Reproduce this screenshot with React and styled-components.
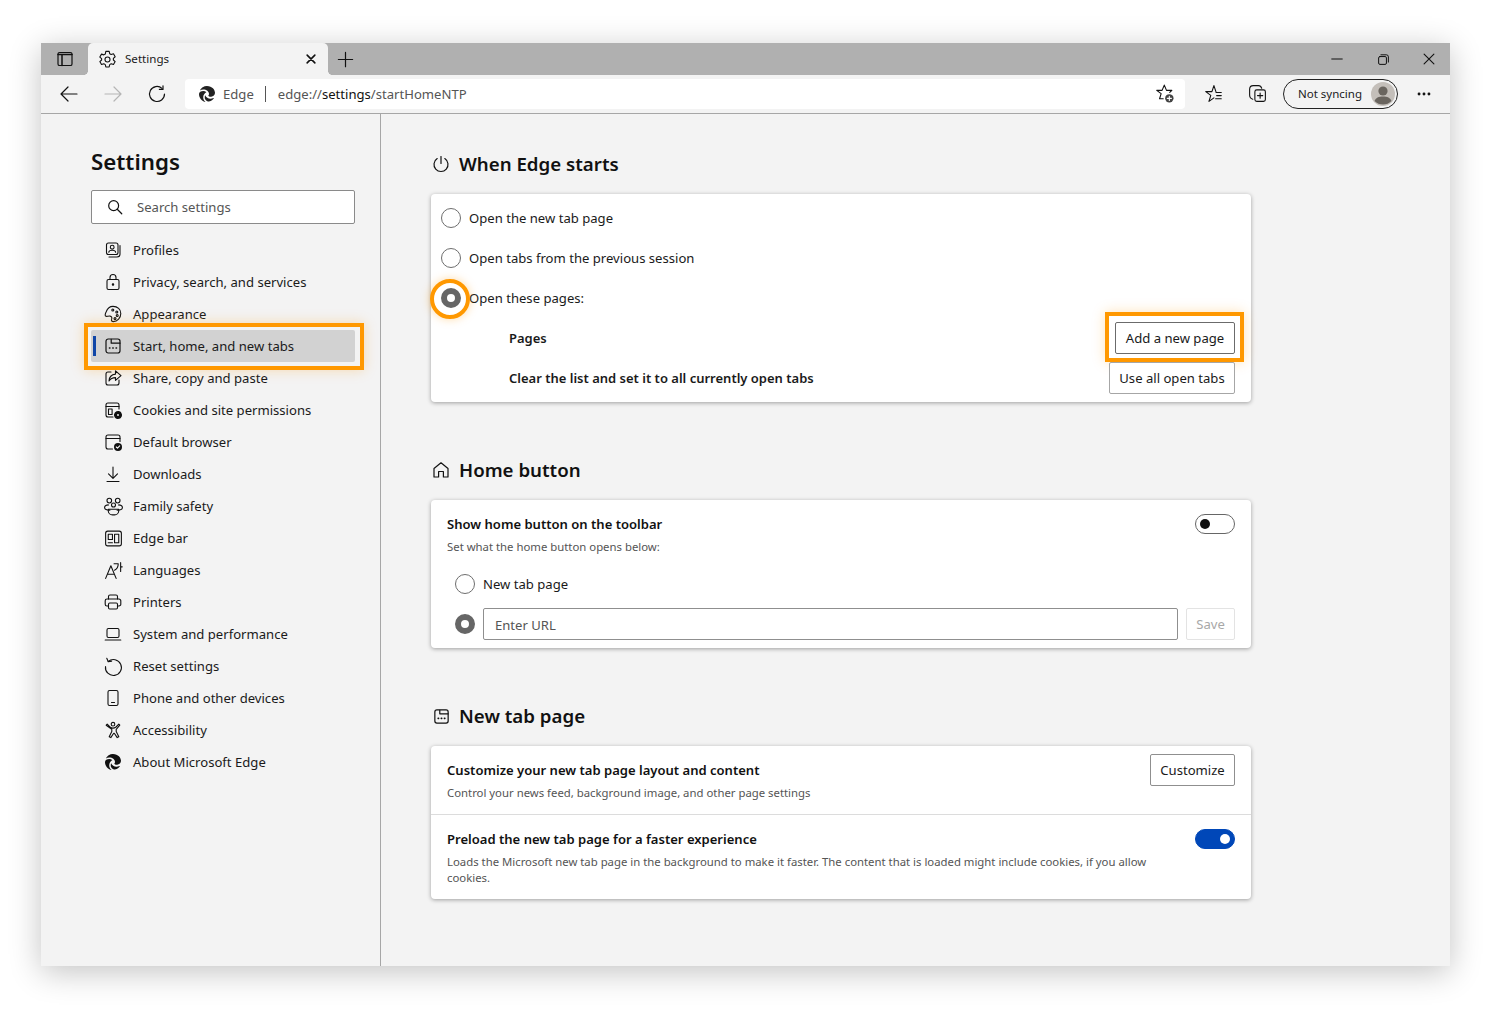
import React from "react";
import styled, { createGlobalStyle } from "styled-components";
import { FaEdge } from "react-icons/fa6";

const FONT = `"Noto Sans", "Open Sans", "Liberation Sans", sans-serif`;
const INK = "#1a1a1a";

const Global = createGlobalStyle`
  html, body { margin: 0; padding: 0; background: #fff; }
  body { font-family: ${FONT}; color: ${INK}; font-size: 13.1px; }
  * { box-sizing: border-box; }
`;

const Page = styled.div`
  width: 1499px;
  height: 1012px;
  padding: 43px 49px 46px 41px;
  overflow: hidden;
`;
const Window = styled.div`
  width: 1409px;
  height: 923px;
  display: flex;
  flex-direction: column;
  background: #f3f3f3;
  box-shadow: 0 6px 30px rgba(0, 0, 0, 0.24);
`;

/* ---------- title bar ---------- */
const TabBar = styled.div`
  height: 32px;
  display: flex;
  align-items: stretch;
  background: #b0b0b0;
  flex: none;
`;
const TabIconButton = styled.div`
  width: ${(p) => p.$w || 46}px;
  display: flex;
  align-items: center;
  justify-content: center;
  flex: none;
`;
const Tab = styled.div`
  position: relative;
  width: 240px;
  display: flex;
  align-items: center;
  padding: 0 10px 0 9px;
  background: #f3f3f3;
  border-radius: 5px 5px 0 0;
  flex: none;
  &::before, &::after {
    content: "";
    position: absolute;
    bottom: 0;
    width: 4px;
    height: 4px;
    background: radial-gradient(circle at var(--cx) 0, #b0b0b0 3.6px, #f3f3f3 4px);
  }
  &::before { left: -4px; --cx: 0; }
  &::after { right: -4px; --cx: 100%; }
`;
const TabTitle = styled.span`
  flex: 1;
  margin: -1px 0 0 7px;
  font-size: 11.6px;
`;
const TabSpacer = styled.div`
  flex: 1;
`;
const WindowControls = styled.div`
  display: flex;
  margin-right: -2px;
`;

/* ---------- toolbar ---------- */
const Toolbar = styled.div`
  height: 39px;
  display: flex;
  align-items: center;
  padding: 0 4px 1px 6px;
  background: #f3f3f3;
  border-bottom: 1px solid #a6a6a6;
  flex: none;
`;
const ToolButton = styled.div`
  width: 44px;
  height: 30px;
  display: flex;
  align-items: center;
  justify-content: center;
  flex: none;
`;
const AddressBar = styled.div`
  flex: 1;
  height: 30px;
  margin: 0 6px;
  padding: 0 10px 0 14px;
  display: flex;
  align-items: center;
  background: #fff;
  border-radius: 4px;
`;
const SiteName = styled.span`
  margin-left: 8px;
  padding-right: 11px;
  margin-right: 12px;
  color: #555;
  line-height: 16px;
  border-right: 1px solid #555;
`;
const Url = styled.span`
  flex: 1;
  color: #555;
  b { font-weight: 400; color: #111; }
`;
const SyncPill = styled.div`
  width: 115px;
  height: 30px;
  margin: 0 4px;
  padding: 0 2px 0 14px;
  display: flex;
  align-items: center;
  justify-content: space-between;
  border: 1px solid #222;
  border-radius: 15px;
  font-size: 11.5px;
  flex: none;
`;

/* ---------- body ---------- */
const Body = styled.div`
  flex: 1;
  display: flex;
  min-height: 0;
`;
const Sidebar = styled.nav`
  width: 340px;
  padding: 32px 25px 0 50px;
  border-right: 1px solid #a6a6a6;
  flex: none;
`;
const SideTitle = styled.h1`
  margin: 0;
  height: 32px;
  line-height: 31px;
  font-size: 22.3px;
  font-weight: 600;
  color: #111;
`;
const Search = styled.div`
  height: 34px;
  margin: 12px 0 10px;
  padding-left: 14px;
  display: flex;
  align-items: center;
  gap: 13px;
  background: #fff;
  border: 1px solid #8a8a8a;
  border-radius: 2px;
  color: #555;
`;
const NavList = styled.div`
  display: flex;
  flex-direction: column;
`;
const NavItem = styled.div`
  position: relative;
  height: 32px;
  padding-left: 12px;
  display: flex;
  align-items: center;
  gap: 10px;
  border-radius: 2px;
  background: ${(p) => (p.$active ? "#d2d2d2" : "transparent")};
`;
const NavIcon = styled.span`
  width: 20px;
  height: 20px;
  display: flex;
  align-items: center;
  justify-content: center;
  flex: none;
`;
const ActiveBar = styled.span`
  position: absolute;
  left: 2px;
  top: 6px;
  width: 3px;
  height: 20px;
  background: #0f46a8;
`;
const Callout = styled.span`
  position: absolute;
  top: ${(p) => p.$t}px;
  bottom: ${(p) => p.$b}px;
  left: ${(p) => p.$l}px;
  right: ${(p) => p.$r}px;
  border: 4px solid #ff9800;
  box-shadow: 0 0 12px rgba(255, 152, 0, 0.28);
  pointer-events: none;
`;

const Main = styled.main`
  flex: 1;
  padding: 34px 0 0 50px;
`;
const Section = styled.section`
  width: 820px;
  & + & { margin-top: 52px; }
`;
const SectionHead = styled.h2`
  margin: 0 0 14px;
  height: 32px;
  padding-bottom: 2px;
  display: flex;
  align-items: center;
  gap: 8px;
  font-size: 18.7px;
  font-weight: 600;
  color: #111;
`;
const SectionIcon = styled.span`
  width: 20px;
  height: 20px;
  margin-top: 2px;
  display: flex;
  align-items: center;
  justify-content: center;
`;
const Card = styled.div`
  background: #fff;
  border-radius: 4px;
  box-shadow: 0 1px 4px rgba(0, 0, 0, 0.35);
  padding: ${(p) => p.$pad || "0"};
`;
const RadioRow = styled.div`
  position: relative;
  height: 40px;
  margin-top: ${(p) => p.$gap || 0}px;
  padding-left: ${(p) => p.$indent || 10}px;
  display: flex;
  align-items: center;
  gap: 8px;
`;
const Radio = styled.span`
  position: relative;
  width: 20px;
  height: 20px;
  border-radius: 50%;
  background: #fff;
  border: ${(p) => (p.$on ? "6px solid #666" : "1px solid #6e6e6e")};
  flex: none;
`;
const RingCallout = styled.span`
  position: absolute;
  left: -1px;
  top: 1px;
  width: 40px;
  height: 40px;
  border: 4px solid #ff9800;
  border-radius: 50%;
  box-shadow: 0 0 10px rgba(255, 152, 0, 0.35);
  pointer-events: none;
`;
const ActionRow = styled.div`
  height: 40px;
  padding: 0 16px 0 78px;
  display: flex;
  align-items: center;
  justify-content: space-between;
  font-weight: 600;
  font-size: 13px;
`;
const Button = styled.div`
  position: relative;
  height: 32px;
  padding: 0 4px;
  display: flex;
  align-items: center;
  justify-content: center;
  width: ${(p) => p.$w}px;
  background: #fff;
  border: 1px solid ${(p) => p.$edge || "#a6a6a6"};
  border-radius: 2px;
  font-size: 13.1px;
  font-weight: 400;
  white-space: nowrap;
  color: ${(p) => (p.$muted ? "#a8a8a8" : INK)};
  flex: none;
`;
const SettingHead = styled.div`
  display: flex;
  align-items: flex-start;
  justify-content: space-between;
  padding: ${(p) => p.$pad};
`;
const SettingTitle = styled.div`
  height: 20px;
  line-height: 20px;
  font-weight: 600;
  font-size: 13.05px;
  color: #111;
`;
const SettingSub = styled.div`
  margin-top: 5px;
  line-height: 16px;
  font-size: 11.35px;
  color: #555;
  white-space: nowrap;
`;
const TextBlock = styled.div`
  margin-top: ${(p) => p.$t || 0}px;
`;
const Toggle = styled.span`
  width: 40px;
  height: 20px;
  padding: 0 4px;
  display: flex;
  align-items: center;
  justify-content: ${(p) => (p.$on ? "flex-end" : "flex-start")};
  border-radius: 10px;
  background: ${(p) => (p.$on ? "#0047b8" : "#fff")};
  border: 1px solid ${(p) => (p.$on ? "#0047b8" : "#666")};
  flex: none;
  &::after {
    content: "";
    width: 10px;
    height: 10px;
    border-radius: 50%;
    background: ${(p) => (p.$on ? "#fff" : "#111")};
  }
`;
const UrlRow = styled.div`
  padding: 4px 16px 8px 24px;
  display: flex;
  align-items: center;
  gap: 8px;
`;
const UrlField = styled.div`
  flex: 1;
  height: 32px;
  padding: 1px 0 0 11px;
  display: flex;
  align-items: center;
  border: 1px solid #8f8f8f;
  border-radius: 2px;
  color: #555;
`;
const Divider = styled.div`
  height: 1px;
  background: #dcdcdc;
`;

/* ---------- icons ---------- */
const IconSvg = styled.svg`
  flex: none;
  * { vector-effect: non-scaling-stroke; }
`;
const Svg = ({ s = 20, w = 1.1, c = "#111", children }) => (
  <IconSvg width={s} height={s} viewBox="0 0 20 20" fill="none" stroke={c} strokeWidth={w} strokeLinecap="round" strokeLinejoin="round">
    {children}
  </IconSvg>
);
const Gear = () => (
  <Svg s={21}>
    <path d="M8.4 2.3h3.2l.5 2.2 1.4.8 2.2-.7 1.6 2.8-1.7 1.5v1.6l1.7 1.5-1.6 2.8-2.2-.7-1.4.8-.5 2.2H8.4l-.5-2.2-1.4-.8-2.2.7-1.6-2.8 1.7-1.5V9.2L2.7 7.7l1.6-2.8 2.2.7 1.4-.8z" />
    <circle cx="10" cy="10" r="2.4" />
  </Svg>
);
const Power = () => (
  <Svg s={20} w={1.2}>
    <path d="M6.2 4.6a7 7 0 1 0 7.6 0" />
    <path d="M10 2.5v7" />
  </Svg>
);
const Home = () => (
  <Svg s={20} w={1.2}>
    <path d="M3 8.500 10 2.800l7 5.700V17h-4.600v-5.500H7.600V17H3z" />
  </Svg>
);
const NewTab = ({ s = 20 }) => (
  <Svg s={s} w={1.2}>
    <rect x="3" y="3" width="14" height="14" rx="2.2" />
    <path d="M8.200 3.400v3.800H17" />
    <path d="M6.500 12h.4M9.800 12h.4M13.100 12h.4" strokeWidth="1.6" />
  </Svg>
);
const navIcons = {
  profiles: (
    <Svg>
      <rect x="3.5" y="3" width="11.5" height="11.5" rx="2" />
      <circle cx="9.2" cy="7.2" r="1.9" />
      <path d="M5.800 12.200c0-1.500 1.200-2 3.400-2s3.400.5 3.400 2" />
      <path d="M17 5.500v8.500a3 3 0 0 1-3 3H6" />
    </Svg>
  ),
  lock: (
    <Svg>
      <rect x="4" y="7.5" width="12" height="10" rx="1.5" />
      <path d="M7 7.500V5.500a3 3 0 0 1 6 0v2" />
      <circle cx="10" cy="12.5" r=".7" fill="#111" />
    </Svg>
  ),
  palette: (
    <Svg>
      <path d="M10 2.400c4.600 0 7.800 3 7.800 7 0 4.400-3.300 8.200-7.500 8.200-1.600 0-2.200-1.100-1.700-2.300.6-1.600.2-3-1.600-3.200-1.500-.2-2.900.5-4 .2-1.200-.3-1-2.500.2-4.600C4.400 4.600 7 2.400 10 2.400z" />
      <circle cx="13.8" cy="8" r="1" /><circle cx="14.2" cy="11.5" r="1" /><circle cx="12" cy="14.6" r="1" /><circle cx="9.8" cy="6" r="1" />
    </Svg>
  ),
  start: <NewTab />,
  share: (
    <Svg>
      <path d="M8 4H5a2 2 0 0 0-2 2v9a2 2 0 0 0 2 2h9a2 2 0 0 0 2-2v-3" />
      <path d="M12.500 2.800 18 7.600l-5.500 4.800V9.600c-3 0-5 .9-6.500 3.400.2-4 2.600-6.500 6.500-6.900z" />
    </Svg>
  ),
  cookies: (
    <Svg>
      <path d="M10 17H5a2 2 0 0 1-2-2V5a2 2 0 0 1 2-2h9a2 2 0 0 1 2 2v4" />
      <path d="M3 6.500h13" />
      <rect x="5.5" y="9" width="3.6" height="5.5" />
      <circle cx="15" cy="15" r="3.2" fill="#111" strokeDasharray="1.6 .7" strokeWidth="1.6" />
      <circle cx="15" cy="15" r=".9" fill="#fff" stroke="none" />
    </Svg>
  ),
  browser: (
    <Svg>
      <path d="M9.500 17H5a2 2 0 0 1-2-2V5a2 2 0 0 1 2-2h10a2 2 0 0 1 2 2v4.500" />
      <path d="M3 6.500h14" />
      <circle cx="15" cy="15" r="4" fill="#111" stroke="none" />
      <path d="M13.300 15l1.200 1.200 2.200-2.400" stroke="#fff" />
    </Svg>
  ),
  download: (
    <Svg>
      <path d="M10 3v11M5.500 9.800 10 14.300l4.500-4.500M4 17.500h12" />
    </Svg>
  ),
  family: (
    <Svg s={21}>
      <circle cx="6" cy="4.4" r="2.2" /><circle cx="14" cy="4.4" r="2.2" /><circle cx="10" cy="8.6" r="1.9" />
      <path d="M6.500 13.500c-3 0-5-.8-5-2.600 0-1.700 1.800-2.500 3.800-2.400M13.500 13.500c3 0 5-.8 5-2.600 0-1.700-1.800-2.500-3.800-2.400" />
      <path d="M5 12.600h10v1.400a4 4 0 0 1-4 4H9a4 4 0 0 1-4-4z" />
    </Svg>
  ),
  edgebar: (
    <Svg s={21}>
      <rect x="2.5" y="3" width="15" height="14" rx="2" />
      <rect x="5" y="6" width="4" height="5" /><rect x="11" y="6" width="4" height="8" />
      <path d="M5 14h4" />
    </Svg>
  ),
  language: (
    <Svg s={21}>
      <path d="M2.500 17.500 7.500 5.500l5 12M4.200 13.500h6.600" />
      <path d="M10.500 3.500h4c0 3-1.200 5-3.500 6.200M16.800 2.500V11M16.800 6.500h1.500" />
    </Svg>
  ),
  printer: (
    <Svg>
      <path d="M5.500 7V4.500a1.500 1.500 0 0 1 1.500-1.500h6a1.500 1.500 0 0 1 1.500 1.500V7" />
      <path d="M5.500 14H4a1.800 1.800 0 0 1-1.800-1.800V8.800A1.800 1.800 0 0 1 4 7h12a1.800 1.800 0 0 1 1.800 1.800v3.400A1.800 1.800 0 0 1 16 14h-1.500" />
      <rect x="5.5" y="11" width="9" height="6" rx="1.2" />
    </Svg>
  ),
  laptop: (
    <Svg>
      <rect x="4" y="4.5" width="12" height="9" rx="1.4" />
      <path d="M2.200 16h15.600" />
    </Svg>
  ),
  reset: (
    <Svg s={21}>
      <path d="M5 5.200A7.600 7.600 0 1 1 2.400 10" />
      <path d="M3.600 2.200 5 5.400l3.200-.5" />
    </Svg>
  ),
  phone: (
    <Svg>
      <rect x="5" y="2.5" width="10" height="15" rx="1.6" />
      <path d="M8.500 14.500h3" />
    </Svg>
  ),
  a11y: (
    <Svg>
      <circle cx="10" cy="4.2" r="1.8" />
      <path d="M4.200 4.200 7 7c1.800 1.300 4.200 1.300 6 0l2.800-2.800 1 1-3.600 4.200v2.200l2.600 5.200-1.600.8-2.900-4.400h-.6l-2.900 4.400-1.600-.8 2.600-5.200V9.400L3.200 5.200z" />
    </Svg>
  ),
  about: <FaEdge size={16} color="#111" />,
};

const items = [
  ["profiles", "Profiles"],
  ["lock", "Privacy, search, and services"],
  ["palette", "Appearance"],
  ["start", "Start, home, and new tabs"],
  ["share", "Share, copy and paste"],
  ["cookies", "Cookies and site permissions"],
  ["browser", "Default browser"],
  ["download", "Downloads"],
  ["family", "Family safety"],
  ["edgebar", "Edge bar"],
  ["language", "Languages"],
  ["printer", "Printers"],
  ["laptop", "System and performance"],
  ["reset", "Reset settings"],
  ["phone", "Phone and other devices"],
  ["a11y", "Accessibility"],
  ["about", "About Microsoft Edge"],
];

export default function App() {
  return (
    <Page>
      <Global />
      <Window>
        <TabBar>
          <TabIconButton $w={47}>
            <Svg s={20} w={1.2}>
              <rect x="3" y="3.5" width="14" height="13" rx="1.6" />
              <path d="M3 5.500h14M7 5.500v11" strokeWidth="1.5" />
            </Svg>
          </TabIconButton>
          <Tab>
            <Gear />
            <TabTitle>Settings</TabTitle>
            <Svg s={14} w={1.6}><path d="M4.500 4.500l11 11M15.500 4.500l-11 11" /></Svg>
          </Tab>
          <TabIconButton $w={34}>
            <Svg s={19} w={1.2}><path d="M10 2.500v15M2.500 10h15" /></Svg>
          </TabIconButton>
          <TabSpacer />
          <WindowControls>
            <TabIconButton><Svg s={14} w={1}><path d="M2.500 10h15" /></Svg></TabIconButton>
            <TabIconButton>
              <Svg s={13} w={1}>
                <rect x="2.5" y="5.5" width="12" height="12" rx="2" />
                <path d="M6 2.800h8.500a3 3 0 0 1 3 3V14" />
              </Svg>
            </TabIconButton>
            <TabIconButton><Svg s={14} w={1.1}><path d="M3 3l14 14M17 3 3 17" /></Svg></TabIconButton>
          </WindowControls>
        </TabBar>
        <Toolbar>
          <ToolButton>
            <Svg s={20} w={1.2}><path d="M18 10H2M9 3l-7 7 7 7" /></Svg>
          </ToolButton>
          <ToolButton>
            <Svg s={20} w={1.2} c="#b5b5b5"><path d="M2 10h16M11 3l7 7-7 7" /></Svg>
          </ToolButton>
          <ToolButton>
            <Svg s={20} w={1.2}>
              <path d="M17.500 10A7.500 7.500 0 1 1 15 4.400" />
              <path d="M16 1.800v3.600h-3.600" />
            </Svg>
          </ToolButton>
          <AddressBar>
            <FaEdge size={16} color="#222" />
            <SiteName>Edge</SiteName>
            <Url>edge://<b>settings</b>/startHomeNTP</Url>
            <Svg s={21}>
              <path d="M8.800 15H5.300l1.500-4.900L2.600 7h5.100L9.800 2l2.100 5h5.100l-2 2" />
              <circle cx="14.6" cy="14.6" r="4" fill="#444" stroke="none" />
              <path d="M14.600 12.600v4M12.600 14.600h4" stroke="#fff" />
            </Svg>
          </AddressBar>
          <ToolButton>
            <Svg s={21}>
              <path d="M10.400 14.200 5.700 17.500 7.400 11.800 2.600 8.200h5.900L10.400 2.500l1.900 5.700" />
              <path d="M12.400 9h5M13 12h4.400M12 15h5.400" />
            </Svg>
          </ToolButton>
          <ToolButton>
            <Svg s={21}>
              <path d="M5.500 15.500C3.500 15 2.500 13.500 2.500 11.500V6c0-2 1.500-3.500 3.500-3.500h5c1.500 0 2.500 1 3 2.500" />
              <rect x="7.5" y="6.5" width="10" height="11" rx="1.8" />
              <path d="M12.500 9.500v5M10 12h5" />
            </Svg>
          </ToolButton>
          <SyncPill>
            Not syncing
            <svg width="24" height="24" viewBox="0 0 24 24">
              <circle cx="12" cy="12" r="12" fill="#c4bfba" />
              <circle cx="12" cy="9" r="4.6" fill="#6a655f" />
              <path d="M3.500 19c1-3.400 4.400-4.600 8.500-4.600s7.500 1.200 8.500 4.600A12 12 0 0 1 3.500 19z" fill="#6a655f" />
            </svg>
          </SyncPill>
          <ToolButton>
            <Svg s={18}>
              <circle cx="4.5" cy="10" r="1" fill="#111" />
              <circle cx="10" cy="10" r="1" fill="#111" />
              <circle cx="15.5" cy="10" r="1" fill="#111" />
            </Svg>
          </ToolButton>
        </Toolbar>
        <Body>
          <Sidebar>
            <SideTitle>Settings</SideTitle>
            <Search>
              <Svg s={18} w={1.2}>
                <circle cx="8.5" cy="8.5" r="5.5" />
                <path d="M12.500 12.500 17.500 17.500" />
              </Svg>
              Search settings
            </Search>
            <NavList>
              {items.map(([icon, label]) => {
                const active = icon === "start";
                return (
                  <NavItem key={icon} $active={active}>
                    {active && <ActiveBar />}
                    <NavIcon>{navIcons[icon]}</NavIcon>
                    {label}
                    {active && <Callout $t={-7} $b={-8} $l={-7} $r={-9} />}
                  </NavItem>
                );
              })}
            </NavList>
          </Sidebar>
          <Main>
            <Section>
              <SectionHead>
                <SectionIcon><Power /></SectionIcon>
                When Edge starts
              </SectionHead>
              <Card $pad="4px 0">
                <RadioRow><Radio />Open the new tab page</RadioRow>
                <RadioRow><Radio />Open tabs from the previous session</RadioRow>
                <RadioRow><Radio $on /><RingCallout />Open these pages:</RadioRow>
                <ActionRow>
                  Pages
                  <Button $w={120} $edge="#6b6b6b">
                    Add a new page
                    <Callout $t={-11} $b={-9} $l={-11} $r={-10} />
                  </Button>
                </ActionRow>
                <ActionRow>
                  Clear the list and set it to all currently open tabs
                  <Button $w={126}>Use all open tabs</Button>
                </ActionRow>
              </Card>
            </Section>
            <Section>
              <SectionHead>
                <SectionIcon><Home /></SectionIcon>
                Home button
              </SectionHead>
              <Card>
                <SettingHead $pad="14px 16px 0">
                  <TextBlock>
                    <SettingTitle>Show home button on the toolbar</SettingTitle>
                    <SettingSub>Set what the home button opens below:</SettingSub>
                  </TextBlock>
                  <Toggle />
                </SettingHead>
                <RadioRow $indent={24} $gap={9}><Radio />New tab page</RadioRow>
                <UrlRow>
                  <Radio $on />
                  <UrlField>Enter URL</UrlField>
                  <Button $w={49} $edge="#e3e3e3" $muted>Save</Button>
                </UrlRow>
              </Card>
            </Section>
            <Section>
              <SectionHead>
                <SectionIcon><NewTab s={19} /></SectionIcon>
                New tab page
              </SectionHead>
              <Card>
                <SettingHead $pad="8px 16px 13px">
                  <TextBlock $t={6}>
                    <SettingTitle>Customize your new tab page layout and content</SettingTitle>
                    <SettingSub>Control your news feed, background image, and other page settings</SettingSub>
                  </TextBlock>
                  <Button $w={85} $edge="#8f8f8f">Customize</Button>
                </SettingHead>
                <Divider />
                <SettingHead $pad="14px 16px 13px">
                  <TextBlock>
                    <SettingTitle>Preload the new tab page for a faster experience</SettingTitle>
                    <SettingSub>
                      Loads the Microsoft new tab page in the background to make it faster. The content that is loaded might include cookies, if you allow
                      <br />
                      cookies.
                    </SettingSub>
                  </TextBlock>
                  <Toggle $on />
                </SettingHead>
              </Card>
            </Section>
          </Main>
        </Body>
      </Window>
    </Page>
  );
}
